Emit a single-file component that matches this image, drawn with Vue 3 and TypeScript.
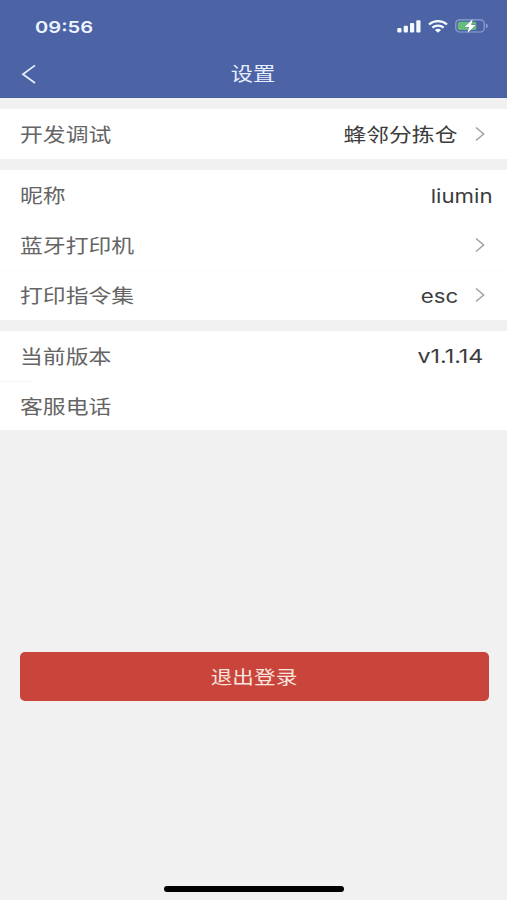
<script setup lang="ts">
interface Row {
  label: string
  value?: string
  arrow?: boolean
  kind?: string
}

const groups: Row[][] = [
  [{ label: '开发调试', value: '蜂邻分拣仓', arrow: true }],
  [
    { label: '昵称', value: 'liumin', kind: 'flush' },
    { label: '蓝牙打印机', arrow: true },
    { label: '打印指令集', value: 'esc', arrow: true },
  ],
  [{ label: '当前版本', value: 'v1.1.14', kind: 'version' }, { label: '客服电话', kind: 'phone' }],
]

const isLatin = (s: string): boolean => /^[\x20-\x7e]+$/.test(s)
</script>

<template>
  <div class="screen">
    <header class="header">
      <div class="status">
        <span class="time">09:56</span>
        <div class="indicators">
          <svg class="signal" width="24" height="13" viewBox="0 0 24 13" fill="#f4f8ff">
            <rect x="0.3" y="8" width="4.2" height="4.6" rx="1" />
            <rect x="6.7" y="5.7" width="4.2" height="6.9" rx="1" />
            <rect x="13" y="3" width="4.2" height="9.6" rx="1" />
            <rect x="19.3" y="0.3" width="4.2" height="12.3" rx="1" />
          </svg>
          <svg class="wifi" width="20" height="13" viewBox="0 0 20 13" fill="none" stroke="#f4f8ff">
            <path d="M1 4.5C6 .1 14 .1 19 4.5" stroke-width="2.3" />
            <path d="M4.3 7.7C7.6 4.9 12.4 4.9 15.7 7.7" stroke-width="2.2" />
            <path d="M6.9 9.9C8.7 8.4 11.3 8.4 13.1 9.9L10 12.7Z" fill="#f4f8ff" stroke="none" />
          </svg>
          <svg class="battery" width="34" height="16" viewBox="0 0 34 16">
            <rect x=".8" y="1.8" width="28.4" height="12.2" rx="3.6" fill="none" stroke="#8fa4d3" stroke-width="1.2" />
            <path d="M31 5.5C33.3 6.2 33.3 9.6 31 10.3Z" fill="#8fa4d3" />
            <rect x="2.8" y="3.7" width="18.5" height="8.4" rx="1.8" fill="#65bd7b" />
            <path d="M17.8 1.1L9.6 8.9H14L12.4 15L20.8 6.9H16.2Z" fill="#fff" stroke="#4c64a5" stroke-width=".6" paint-order="stroke" />
          </svg>
        </div>
      </div>
      <div class="nav">
        <svg class="back" width="16" height="20" viewBox="0 0 16 20" fill="none" stroke="#e9f0ff" stroke-width="1.7">
          <path d="M14 1.4L1.9 10.2L14 19" />
        </svg>
        <h1 class="title"><span class="wide center">设置</span></h1>
      </div>
    </header>

    <main class="groups">
      <section v-for="(group, i) in groups" :key="i" class="group">
        <div v-for="row in group" :key="row.label" class="row" :class="row.kind">
          <span class="label wide">{{ row.label }}</span>
          <span v-if="row.value" class="value wide" :class="{ latin: isLatin(row.value) }">{{ row.value }}</span>
          <svg v-if="row.arrow" class="arrow" width="10" height="16" viewBox="0 0 10 16" fill="none" stroke="#a0a0a0" stroke-width="1.5">
            <path d="M1 1.5L8.6 8L1 14.5" />
          </svg>
        </div>
      </section>
    </main>

    <button class="logout" type="button"><span class="wide center">退出登录</span></button>
    <div class="home-bar"></div>
  </div>
</template>

<style>
body {
  background: #f1f1f1;
}
</style>

<style scoped>
.screen {
  box-sizing: border-box;
  display: flex;
  flex-direction: column;
  height: 900px;
  padding-bottom: 8.5px;
  overflow: hidden;
  background: #f1f1f1;
  font-family: Inter, "Noto Sans CJK SC", sans-serif;
}
.header {
  box-sizing: border-box;
  flex: none;
  height: 98px;
  background: #4c64a5;
  border-bottom: 1px solid #4560a0;
}
.status {
  display: flex;
  align-items: center;
  justify-content: space-between;
  height: 52px;
  padding: 0 18px 0 35px;
}
.time {
  padding-top: 1px;
  color: #edf3ff;
  font-size: 16.5px;
  font-weight: 600;
  line-height: 20px;
  transform: scaleX(1.22);
  transform-origin: left;
}
.indicators {
  display: flex;
  align-items: center;
  gap: 7px;
}
.nav {
  display: grid;
  grid-template-columns: 1fr auto 1fr;
  align-items: center;
  height: 44px;
  padding: 0 21px;
}
.title {
  margin: 0;
  padding-top: 2px;
  color: #e6edfd;
  font-size: 19px;
  font-weight: 400;
  line-height: 24px;
}
.wide {
  display: inline-block;
  transform: scaleX(1.17);
  transform-origin: left;
}
.center {
  transform-origin: center;
}
.groups {
  display: flex;
  flex: none;
  flex-direction: column;
  gap: 11px;
  padding-top: 11px;
}
.group {
  background: #fff;
}
.row {
  display: flex;
  align-items: center;
  height: 50px;
  padding: 0 22px 0 20px;
  font-size: 19.5px;
  line-height: 28px;
}
.row + .row {
  box-shadow: inset 0 1px #fcfcfc;
}
.row.flush {
  padding-right: 14px;
}
.row.version {
  padding-right: 24px;
}
.row.phone {
  height: 49px;
  background: linear-gradient(#f5f5f5, #f5f5f5) 0 0 / 32px 1px no-repeat;
  box-shadow: none;
}
.label {
  padding-top: 2px;
  color: #656565;
}
.value {
  margin-left: auto;
  padding-top: 2px;
  color: #3c3c3c;
  transform-origin: right;
}
.value.latin {
  padding-top: 1px;
  font-size: 18.5px;
  transform: scaleX(1.2);
}
.version .value.latin {
  padding-top: 0;
  transform: scaleX(1.26);
}
.arrow {
  margin-left: 17px;
}
.label + .arrow {
  margin-left: auto;
}
.logout {
  flex: none;
  height: 48.5px;
  margin: 222px 18.5px 0 19.5px;
  padding: 2px 0 0;
  border: 0;
  border-radius: 5px;
  background: #c9443b;
  color: #fae5df;
  font-family: inherit;
  font-size: 18.5px;
  line-height: 46.5px;
}
.home-bar {
  align-self: center;
  width: 180px;
  height: 5.5px;
  margin: auto 0 0 1px;
  border-radius: 3px;
  background: #000;
}
</style>
